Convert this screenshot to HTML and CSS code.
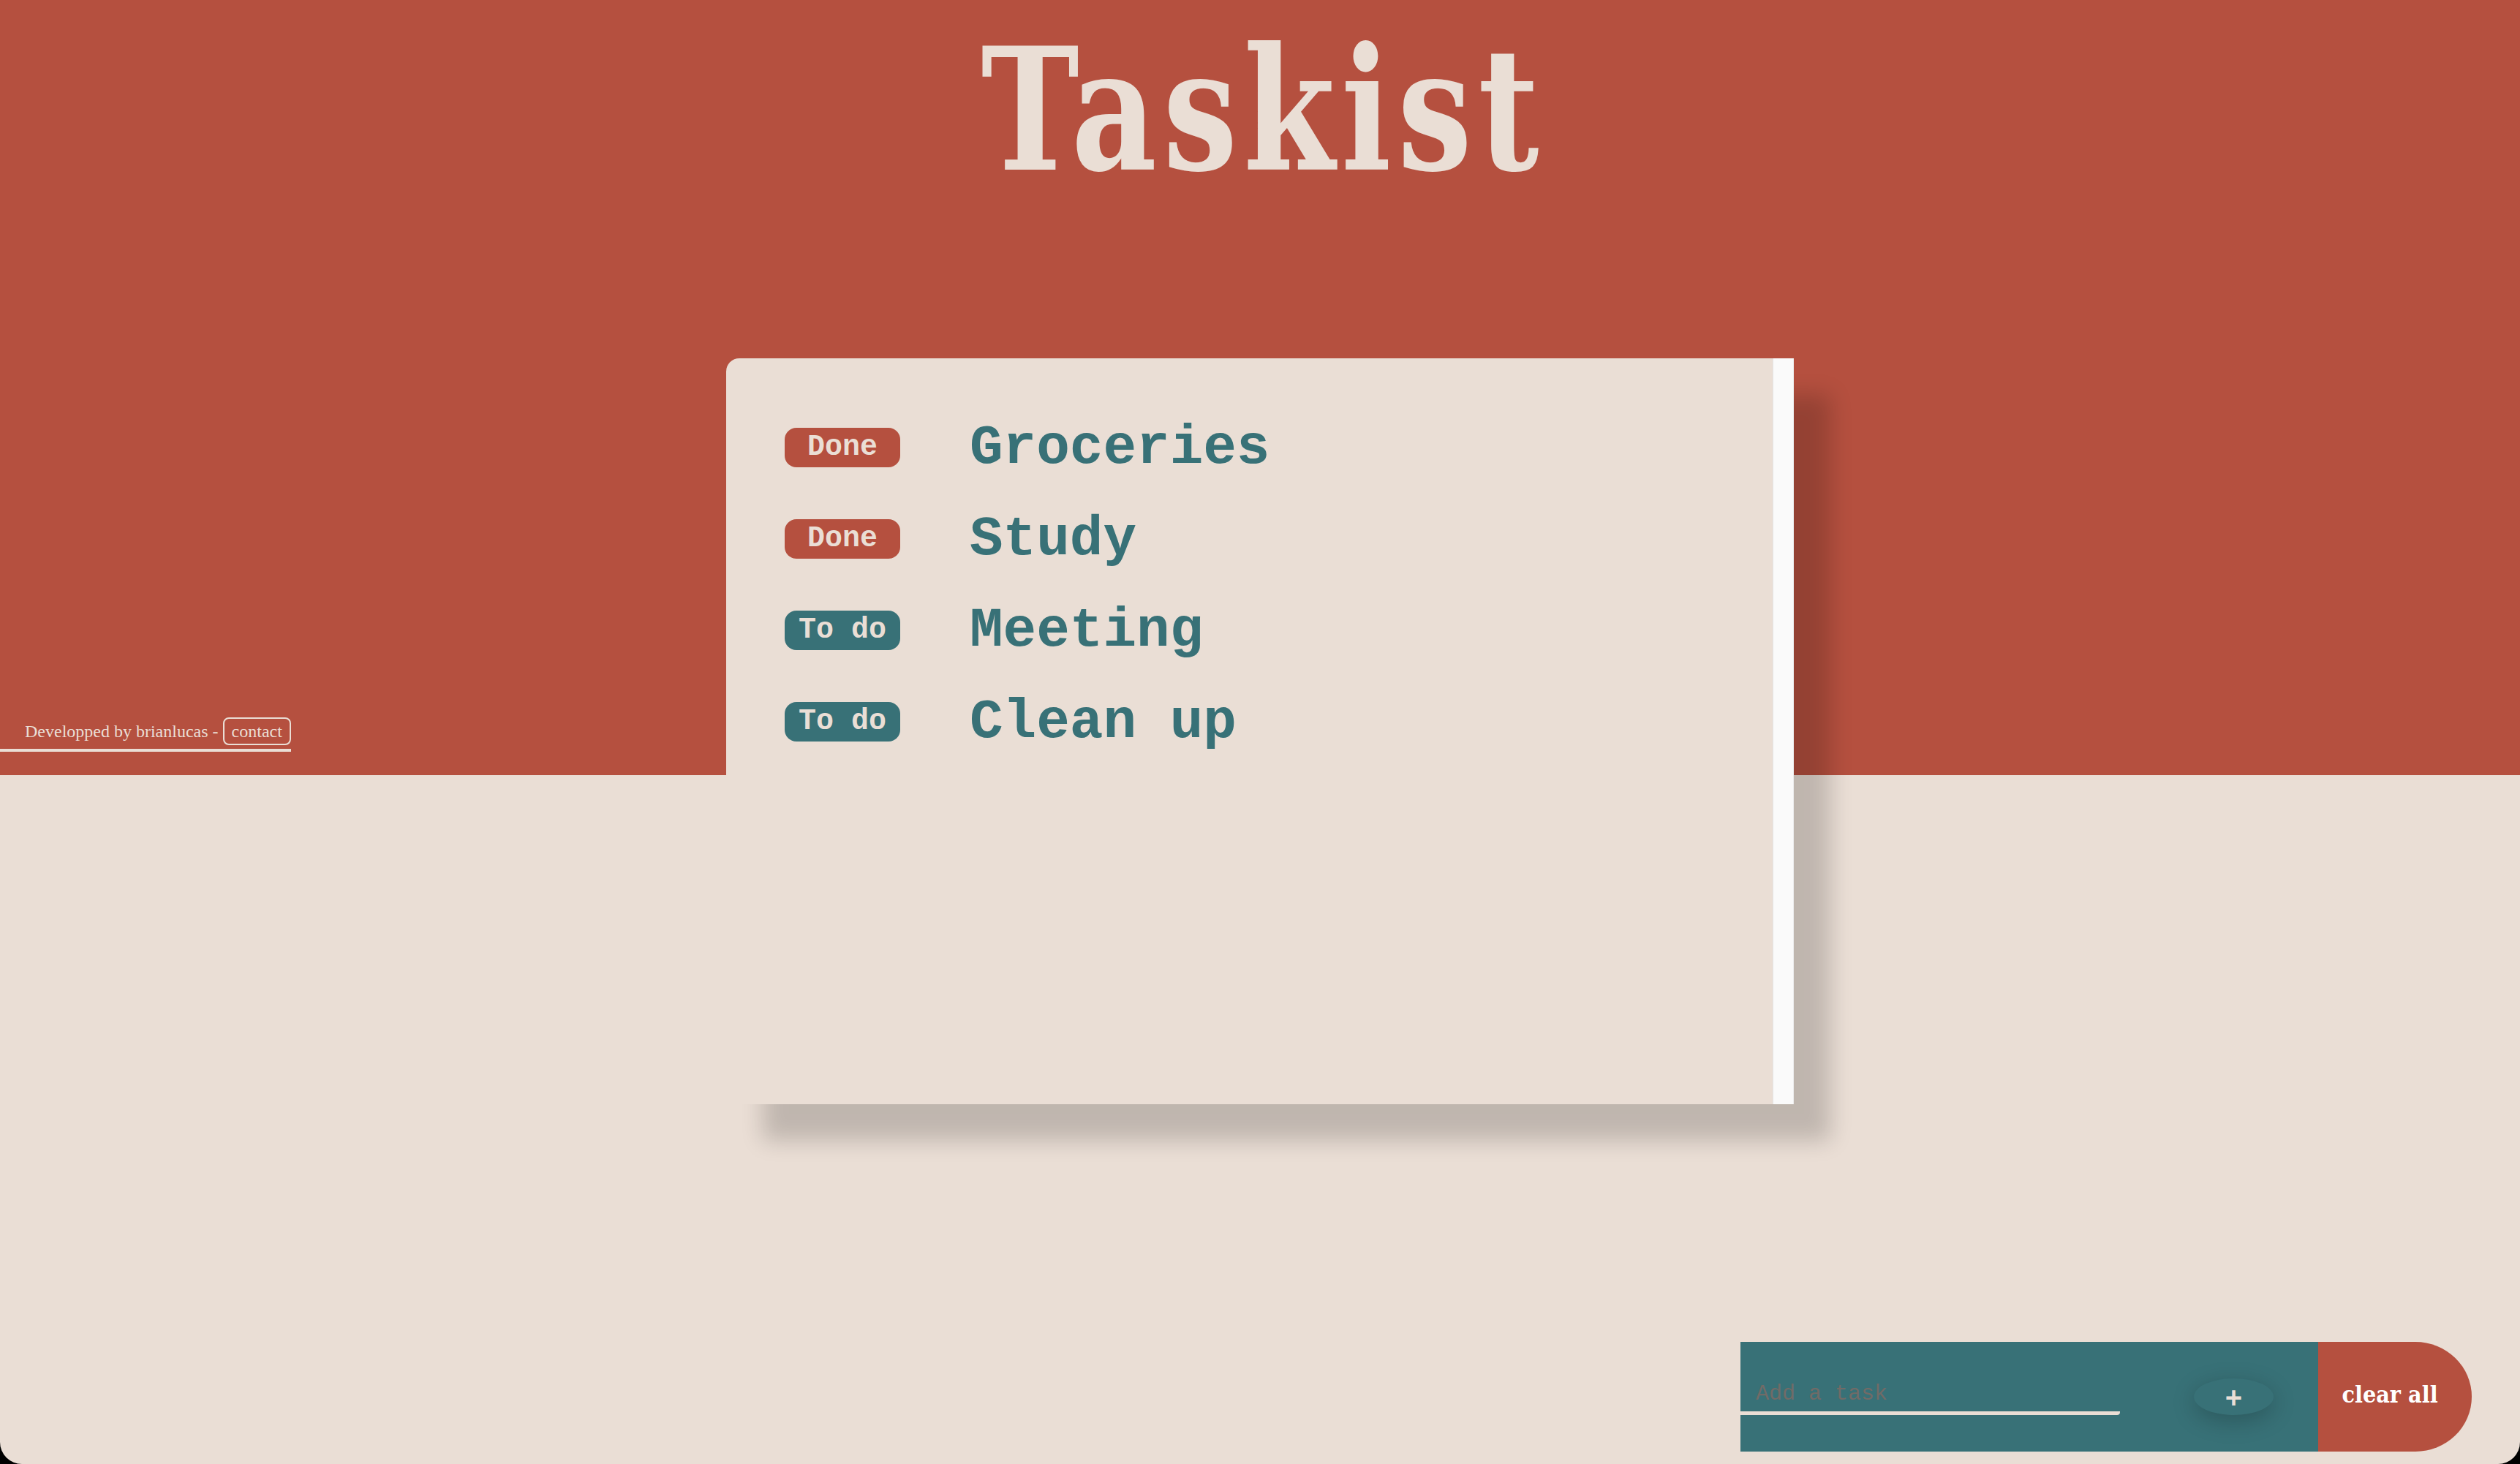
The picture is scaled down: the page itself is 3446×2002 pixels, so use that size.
FILE: index.html
```html
<!DOCTYPE html>
<html lang="en">
<head>
    <meta charset="UTF-8">
    <meta name="viewport" content="width=device-width, initial-scale=1.0">
    <title>Taskist</title>
    <link rel="stylesheet" href="styles.css">
</head>
<body>
    <header class="hero">
        <h1 class="logo">Taskist</h1>
        <p class="credits">Developped by brianlucas - <a href="#" class="contact">contact</a></p>
    </header>

    <main class="board">
        <div class="card">
            <ul class="tasks">
                <li class="task"><span class="badge badge-done">Done</span><span class="task-name">Groceries</span></li>
                <li class="task"><span class="badge badge-done">Done</span><span class="task-name">Study</span></li>
                <li class="task"><span class="badge badge-todo">To do</span><span class="task-name">Meeting</span></li>
                <li class="task"><span class="badge badge-todo">To do</span><span class="task-name">Clean up</span></li>
            </ul>
            <div class="track"></div>
        </div>

        <!-- Ajouter une tâche -->
        <form class="composer" onsubmit="return false">
            <div class="composer-field">
                <input type="text" class="task-input" placeholder="Add a task">
                <button type="submit" class="btn-add">+</button>
            </div>
            <button type="button" class="btn-clear">clear all</button>
        </form>
    </main>
</body>
</html>
```

FILE: styles.css
```css
/* Couleurs de base */
html {
    background: #000;
}

body {
    margin: 0;
    height: 2002px;
    display: flex;
    flex-direction: column;
    background-color: #eaded5;
    border-radius: 0 0 30px 30px;
    overflow: hidden;
    font-family: "Liberation Mono", "Courier New", monospace;
}

/* Partie haute rouge */
.hero {
    height: 1060px;
    flex-shrink: 0;
    display: flex;
    flex-direction: column;
    background-color: #b5503f;
}

.logo {
    margin: 34px 0 0;
    padding-left: 10px;
    text-align: center;
    font-family: "DejaVu Serif Condensed", "DejaVu Serif", serif;
    font-stretch: condensed;
    font-size: 233px;
    line-height: 233px;
    letter-spacing: 10px;
    font-weight: bold;
    color: #eaded5;
    transform: scaleX(0.86);
}

.credits {
    align-self: flex-start;
    margin: auto 0 32px;
    padding: 0 0 5px 34px;
    border-bottom: 4px solid #eaded5;
    font-family: "Liberation Serif", "Times New Roman", serif;
    font-size: 24px;
    line-height: 38px;
    color: #eaded5;
}

.contact {
    display: inline-block;
    padding: 0 10px;
    border: 2px solid #eaded5;
    border-radius: 8px;
    line-height: 34px;
    color: #eaded5;
    text-decoration: none;
}

/* Liste des tâches */
.board {
    flex: 1;
    display: flex;
    flex-direction: column;
}

.card {
    width: 1460px;
    height: 1020px;
    margin: -570px auto 0;
    display: flex;
    background-color: #eaded5;
    border-radius: 18px 0 0 0;
    box-shadow: 50px 50px 30px rgba(0, 0, 0, 0.18);
}

.tasks {
    flex: 1;
    margin: 0;
    padding: 82px 0 0 80px;
    list-style: none;
    display: flex;
    flex-direction: column;
    gap: 46px;
}

.task {
    display: flex;
    align-items: center;
    gap: 95px;
}

.badge {
    width: 158px;
    height: 54px;
    display: flex;
    align-items: center;
    justify-content: center;
    border-radius: 16px;
    font-size: 40px;
    font-weight: bold;
    color: #eaded5;
}

.badge-done {
    background-color: #b5503f;
}

.badge-todo {
    background-color: #387177;
}

.task-name {
    font-size: 76px;
    line-height: 76px;
    font-weight: bold;
    color: #387177;
    padding-top: 3px;
}

.track {
    width: 27px;
    background-color: #fafafa;
    border-left: 1px solid #e3e3e3;
    border-right: 1px solid #ececec;
}

/* Barre d'ajout */
.composer {
    margin: auto 66px 17px auto;
    display: flex;
    height: 150px;
}

.composer-field {
    width: 790px;
    display: flex;
    align-items: center;
    background-color: #387177;
}

.task-input {
    width: 498px;
    height: 40px;
    padding: 0 0 4px 21px;
    background: transparent;
    border: none;
    border-bottom: 5px solid #eaded5;
    border-radius: 0 0 4px 0;
    font-family: "Liberation Mono", "Courier New", monospace;
    font-size: 30px;
    color: #eaded5;
    outline: none;
}

.task-input::placeholder {
    color: #716b67;
}

.btn-add {
    width: 109px;
    height: 50px;
    margin-left: 101px;
    border: none;
    border-radius: 50%;
    background-color: #387177;
    box-shadow: 0 8px 32px rgba(0, 0, 0, 0.22);
    font-family: "Liberation Sans", Arial, sans-serif;
    font-size: 40px;
    font-weight: bold;
    line-height: 50px;
    color: #eaded5;
    cursor: pointer;
}

.btn-clear {
    width: 210px;
    padding: 0 14px 6px 0;
    border: none;
    border-radius: 0 77px 77px 0 / 0 75px 75px 0;
    background-color: #b5503f;
    font-family: "DejaVu Serif Condensed", "DejaVu Serif", serif;
    font-stretch: condensed;
    font-size: 32px;
    font-weight: bold;
    color: #fff;
    cursor: pointer;
}
```
